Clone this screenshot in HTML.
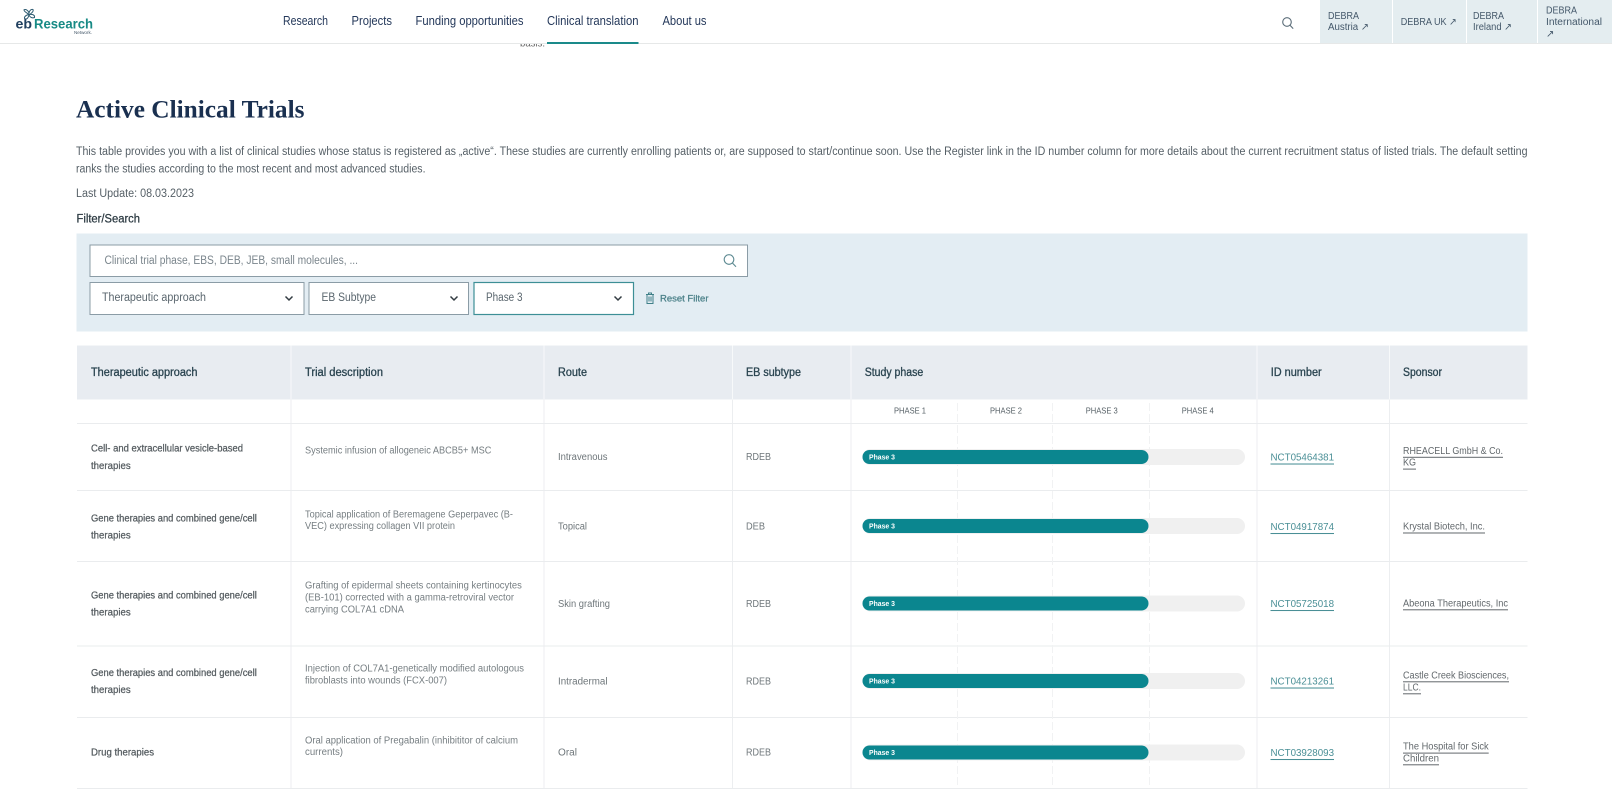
<!DOCTYPE html>
<html lang="en"><head><meta charset="utf-8"><title>Active Clinical Trials</title>
<style>
html,body{margin:0;padding:0;background:#fff;width:1612px;height:800px;overflow:hidden}
svg{display:block}
text{font-family:"Liberation Sans",sans-serif;dominant-baseline:central;transform:translateY(.8px)}
.nav{font-size:12.5px;fill:#24385a}
.deb{font-size:10px;fill:#44586a}
.p{font-size:11.5px;fill:#555f66}
.ph{font-size:11.5px;fill:#5a666e}
.th{font-size:11.5px;fill:#2a4450;stroke:#2a4450;stroke-width:.3px}
.c1{font-size:10px;fill:#555c60;stroke:#555c60;stroke-width:.25px}
.c2{font-size:10px;fill:#767e82}
.c3{font-size:10px;fill:#6e767a}
.lab{font-size:8px;fill:#566066}
.bar{font-size:7.5px;font-weight:bold;fill:#fff;transform:none}
.id{font-size:10.5px;fill:#4a8f96;text-decoration:underline}
.sp{font-size:10px;fill:#62686c;text-decoration:underline}
</style></head><body>
<svg width="1612" height="800" viewBox="0 0 1612 800" xmlns="http://www.w3.org/2000/svg">
<rect width="1612" height="800" fill="#fff"/>
<text x="520" y="43" style="font-size:10px;fill:#666" textLength="25" lengthAdjust="spacingAndGlyphs">basis.</text>
<rect width="1612" height="43" fill="#fff"/>
<rect y="43" width="1612" height="1" fill="#e6e8e8"/>
<g fill="none" stroke="#2c5a70" stroke-width="1"><path d="M29 14.5C26 12 24 12 24 9.8 25.5 9 28 10 29 13 29.5 10.5 31 9 33 9.5 34 11.5 32 13 29.5 14.5 32.5 14 35 15 34.5 17.5 32 18.5 30 17 29 15 28.5 17 27.5 19.5 25 19 23.5 17.5 25.5 15 29 14.5Z"/></g>
<text x="15.5" y="23.3" style="font-size:13.5px;font-weight:bold;fill:#21405f" textLength="16.5" lengthAdjust="spacingAndGlyphs">eb</text>
<text x="34" y="23.3" style="font-size:13.5px;font-weight:bold;fill:#178a85" textLength="59" lengthAdjust="spacingAndGlyphs">Research</text>
<text x="74" y="31.5" style="font-size:4.5px;fill:#44586a" textLength="18" lengthAdjust="spacingAndGlyphs">Network.</text>
<text class="nav" x="283" y="20" textLength="45" lengthAdjust="spacingAndGlyphs">Research</text>
<text class="nav" x="351.5" y="20" textLength="40.5" lengthAdjust="spacingAndGlyphs">Projects</text>
<text class="nav" x="415.5" y="20" textLength="108" lengthAdjust="spacingAndGlyphs">Funding opportunities</text>
<text class="nav" x="547" y="20" textLength="91.5" lengthAdjust="spacingAndGlyphs">Clinical translation</text>
<text class="nav" x="662.5" y="20" textLength="44" lengthAdjust="spacingAndGlyphs">About us</text>
<rect x="547" y="42" width="91.5" height="2" fill="#1a8a8a"/>
<g fill="none" stroke="#5a6c78" stroke-width="1.1"><circle cx="1287" cy="22" r="4.3"/><path d="M1290 25.2l3.2 3.4"/></g>
<rect x="1320" width="72" height="43" fill="#e4edf0"/><rect x="1393" width="73" height="43" fill="#e4edf0"/><rect x="1467" width="70" height="43" fill="#e4edf0"/><rect x="1538" width="74" height="43" fill="#e4edf0"/>
<text class="deb" x="1328" y="15.5" textLength="31" lengthAdjust="spacingAndGlyphs">DEBRA</text>
<text class="deb" x="1328" y="26.5" textLength="41" lengthAdjust="spacingAndGlyphs">Austria ↗</text>
<text class="deb" x="1400.7" y="21.5" textLength="56" lengthAdjust="spacingAndGlyphs">DEBRA UK ↗</text>
<text class="deb" x="1473" y="15.5" textLength="31" lengthAdjust="spacingAndGlyphs">DEBRA</text>
<text class="deb" x="1473" y="26.5" textLength="39" lengthAdjust="spacingAndGlyphs">Ireland ↗</text>
<text class="deb" x="1546" y="10" textLength="31" lengthAdjust="spacingAndGlyphs">DEBRA</text>
<text class="deb" x="1546" y="21.5" textLength="56" lengthAdjust="spacingAndGlyphs">International</text>
<text class="deb" x="1546" y="33.5">↗</text>

<text x="76" y="108" style="font-family:'Liberation Serif',serif;font-size:25.5px;font-weight:bold;fill:#1a3050" textLength="228.5" lengthAdjust="spacingAndGlyphs">Active Clinical Trials</text>
<text class="p" x="76" y="151" textLength="1451.5" lengthAdjust="spacingAndGlyphs">This table provides you with a list of clinical studies whose status is registered as „active“. These studies are currently enrolling patients or, are supposed to start/continue soon. Use the Register link in the ID number column for more details about the current recruitment status of listed trials. The default setting</text>
<text class="p" x="76" y="168.5" textLength="349.5" lengthAdjust="spacingAndGlyphs">ranks the studies according to the most recent and most advanced studies.</text>
<text class="p" x="76" y="193" textLength="118" lengthAdjust="spacingAndGlyphs">Last Update: 08.03.2023</text>
<text class="p" x="76.5" y="218.5" textLength="63.5" lengthAdjust="spacingAndGlyphs" style="fill:#2c3a42;stroke:#2c3a42;stroke-width:.25px">Filter/Search</text>

<rect x="76.5" y="233.5" width="1451" height="98" fill="#e3edf3"/>
<rect x="90" y="245" width="657.5" height="31.5" fill="#fff" stroke="#8b9ca6"/>
<text class="ph" x="104.5" y="260" textLength="253.5" lengthAdjust="spacingAndGlyphs" style="fill:#7a858c">Clinical trial phase, EBS, DEB, JEB, small molecules, ...</text>
<g fill="none" stroke="#5d8a92" stroke-width="1.1"><circle cx="729" cy="259.5" r="4.8"/><path d="M732.4 263l3.6 3.8"/></g>
<rect x="90" y="282.5" width="214" height="32" fill="#fff" stroke="#8b9ca6"/>
<rect x="309" y="282.5" width="159.5" height="32" fill="#fff" stroke="#8b9ca6"/>
<rect x="474" y="282.5" width="159.5" height="32" fill="#fff" stroke="#3d8f96" stroke-width="1.2"/>
<text class="ph" x="102" y="297" textLength="104" lengthAdjust="spacingAndGlyphs">Therapeutic approach</text>
<text class="ph" x="321.5" y="297" textLength="54.5" lengthAdjust="spacingAndGlyphs">EB Subtype</text>
<text class="ph" x="486" y="297" textLength="36.5" lengthAdjust="spacingAndGlyphs">Phase 3</text>
<g fill="none" stroke="#333c42" stroke-width="1.5"><path d="M285.5 296.5l3.5 3.5 3.5-3.5M450.5 296.5l3.5 3.5 3.5-3.5M614.5 296.5l3.5 3.5 3.5-3.5"/></g>
<g fill="none" stroke="#3f8088" stroke-width="1"><path d="M646 294.5h8M648.5 294.5v-1.5h3v1.5M647 294.5v9h6v-9M649 296.5v5M651 296.5v5"/></g>
<text x="660" y="298" style="font-size:9.5px;fill:#4a8088;stroke:#4a8088;stroke-width:.25px" textLength="48.5" lengthAdjust="spacingAndGlyphs">Reset Filter</text>

<rect x="77" y="345.5" width="1450.5" height="54" fill="#e8ecf1"/>
<g fill="#f7f9fa"><rect x="290.5" y="345.5" width="1" height="54"/><rect x="543.5" y="345.5" width="1" height="54"/><rect x="732" y="345.5" width="1" height="54"/><rect x="850.5" y="345.5" width="1" height="54"/><rect x="1256.5" y="345.5" width="1" height="54"/><rect x="1389" y="345.5" width="1" height="54"/></g>
<text class="th" x="91" y="372" textLength="106.5" lengthAdjust="spacingAndGlyphs">Therapeutic approach</text>
<text class="th" x="305" y="372" textLength="78" lengthAdjust="spacingAndGlyphs">Trial description</text>
<text class="th" x="558" y="372" textLength="29" lengthAdjust="spacingAndGlyphs">Route</text>
<text class="th" x="746" y="372" textLength="55" lengthAdjust="spacingAndGlyphs">EB subtype</text>
<text class="th" x="864.7" y="372" textLength="58.5" lengthAdjust="spacingAndGlyphs">Study phase</text>
<text class="th" x="1270.7" y="372" textLength="51" lengthAdjust="spacingAndGlyphs">ID number</text>
<text class="th" x="1403" y="372" textLength="39" lengthAdjust="spacingAndGlyphs">Sponsor</text>

<g fill="#eceef0"><rect x="290.5" y="399.5" width="1" height="389"/><rect x="543.5" y="399.5" width="1" height="389"/><rect x="732" y="399.5" width="1" height="389"/><rect x="850.5" y="399.5" width="1" height="389"/><rect x="1256.5" y="399.5" width="1" height="389"/><rect x="1389" y="399.5" width="1" height="389"/></g>
<g fill="#eaecee"><rect x="77" y="423" width="1450.5" height="1"/><rect x="77" y="490" width="1450.5" height="1"/><rect x="77" y="561" width="1450.5" height="1"/><rect x="77" y="645.5" width="1450.5" height="1"/><rect x="77" y="717" width="1450.5" height="1"/><rect x="77" y="788" width="1450.5" height="1"/></g>
<g stroke="#f1f2f3" stroke-dasharray="8 3"><path d="M957.5 403v385M1052.5 403v385M1149.5 403v385"/></g>
<text class="lab" x="894" y="410" textLength="32" lengthAdjust="spacingAndGlyphs">PHASE 1</text>
<text class="lab" x="990" y="410" textLength="32" lengthAdjust="spacingAndGlyphs">PHASE 2</text>
<text class="lab" x="1085.7" y="410" textLength="32" lengthAdjust="spacingAndGlyphs">PHASE 3</text>
<text class="lab" x="1181.7" y="410" textLength="32" lengthAdjust="spacingAndGlyphs">PHASE 4</text>

<g fill="#f0f0f0">
<rect x="862.5" y="449" width="382.5" height="16" rx="8"/><rect x="862.5" y="518" width="382.5" height="16" rx="8"/><rect x="862.5" y="595.5" width="382.5" height="16" rx="8"/><rect x="862.5" y="673" width="382.5" height="16" rx="8"/><rect x="862.5" y="744.5" width="382.5" height="16" rx="8"/></g>
<g fill="#0b868f">
<rect x="862.5" y="450" width="286" height="14" rx="7"/><rect x="862.5" y="519" width="286" height="14" rx="7"/><rect x="862.5" y="596.5" width="286" height="14" rx="7"/><rect x="862.5" y="674" width="286" height="14" rx="7"/><rect x="862.5" y="745.5" width="286" height="14" rx="7"/></g>
<text class="bar" x="869" y="457" textLength="26" lengthAdjust="spacingAndGlyphs">Phase 3</text>
<text class="bar" x="869" y="526" textLength="26" lengthAdjust="spacingAndGlyphs">Phase 3</text>
<text class="bar" x="869" y="603.5" textLength="26" lengthAdjust="spacingAndGlyphs">Phase 3</text>
<text class="bar" x="869" y="681" textLength="26" lengthAdjust="spacingAndGlyphs">Phase 3</text>
<text class="bar" x="869" y="752.5" textLength="26" lengthAdjust="spacingAndGlyphs">Phase 3</text>

<text class="c1" x="91" y="448.3" textLength="152" lengthAdjust="spacingAndGlyphs">Cell- and extracellular vesicle-based</text>
<text class="c1" x="91" y="465.7" textLength="39.7" lengthAdjust="spacingAndGlyphs">therapies</text>
<text class="c1" x="91" y="518.3" textLength="165.8" lengthAdjust="spacingAndGlyphs">Gene therapies and combined gene/cell</text>
<text class="c1" x="91" y="535" textLength="39.7" lengthAdjust="spacingAndGlyphs">therapies</text>
<text class="c1" x="91" y="595.3" textLength="165.8" lengthAdjust="spacingAndGlyphs">Gene therapies and combined gene/cell</text>
<text class="c1" x="91" y="612" textLength="39.7" lengthAdjust="spacingAndGlyphs">therapies</text>
<text class="c1" x="91" y="672.7" textLength="165.8" lengthAdjust="spacingAndGlyphs">Gene therapies and combined gene/cell</text>
<text class="c1" x="91" y="689.7" textLength="39.7" lengthAdjust="spacingAndGlyphs">therapies</text>
<text class="c1" x="91" y="752.3" textLength="63" lengthAdjust="spacingAndGlyphs">Drug therapies</text>

<text class="c2" x="305" y="450" textLength="186.4" lengthAdjust="spacingAndGlyphs">Systemic infusion of allogeneic ABCB5+ MSC</text>
<text class="c2" x="305" y="514" textLength="208" lengthAdjust="spacingAndGlyphs">Topical application of Beremagene Geperpavec (B-</text>
<text class="c2" x="305" y="525.7" textLength="150" lengthAdjust="spacingAndGlyphs">VEC) expressing collagen VII protein</text>
<text class="c2" x="305" y="585.3" textLength="216.8" lengthAdjust="spacingAndGlyphs">Grafting of epidermal sheets containing kertinocytes</text>
<text class="c2" x="305" y="597" textLength="209" lengthAdjust="spacingAndGlyphs">(EB-101) corrected with a gamma-retroviral vector</text>
<text class="c2" x="305" y="609.3" textLength="99" lengthAdjust="spacingAndGlyphs">carrying COL7A1 cDNA</text>
<text class="c2" x="305" y="668.3" textLength="219" lengthAdjust="spacingAndGlyphs">Injection of COL7A1-genetically modified autologous</text>
<text class="c2" x="305" y="680" textLength="142" lengthAdjust="spacingAndGlyphs">fibroblasts into wounds (FCX-007)</text>
<text class="c2" x="305" y="740" textLength="213" lengthAdjust="spacingAndGlyphs">Oral application of Pregabalin (inhibititor of calcium</text>
<text class="c2" x="305" y="751.7" textLength="38" lengthAdjust="spacingAndGlyphs">currents)</text>

<text class="c3" x="558" y="456.7" textLength="49.5" lengthAdjust="spacingAndGlyphs">Intravenous</text>
<text class="c3" x="558" y="526.3" textLength="29" lengthAdjust="spacingAndGlyphs">Topical</text>
<text class="c3" x="558" y="603.5" textLength="52" lengthAdjust="spacingAndGlyphs">Skin grafting</text>
<text class="c3" x="558" y="681" textLength="49.5" lengthAdjust="spacingAndGlyphs">Intradermal</text>
<text class="c3" x="558" y="752.3" textLength="19" lengthAdjust="spacingAndGlyphs">Oral</text>

<text class="c3" x="746" y="456.7" textLength="25" lengthAdjust="spacingAndGlyphs">RDEB</text>
<text class="c3" x="746" y="526.3" textLength="19" lengthAdjust="spacingAndGlyphs">DEB</text>
<text class="c3" x="746" y="603.5" textLength="25" lengthAdjust="spacingAndGlyphs">RDEB</text>
<text class="c3" x="746" y="681" textLength="25" lengthAdjust="spacingAndGlyphs">RDEB</text>
<text class="c3" x="746" y="752.3" textLength="25" lengthAdjust="spacingAndGlyphs">RDEB</text>

<text class="id" x="1270.5" y="456.7" textLength="63.5" lengthAdjust="spacingAndGlyphs">NCT05464381</text>
<text class="id" x="1270.5" y="526.2" textLength="63.5" lengthAdjust="spacingAndGlyphs">NCT04917874</text>
<text class="id" x="1270.5" y="603.2" textLength="63.5" lengthAdjust="spacingAndGlyphs">NCT05725018</text>
<text class="id" x="1270.5" y="680.7" textLength="63.5" lengthAdjust="spacingAndGlyphs">NCT04213261</text>
<text class="id" x="1270.5" y="752.2" textLength="63.5" lengthAdjust="spacingAndGlyphs">NCT03928093</text>

<text class="sp" x="1403" y="450.5" textLength="100" lengthAdjust="spacingAndGlyphs">RHEACELL GmbH &amp; Co.</text>
<text class="sp" x="1403" y="462.3" textLength="13" lengthAdjust="spacingAndGlyphs">KG</text>
<text class="sp" x="1403" y="526.2" textLength="82" lengthAdjust="spacingAndGlyphs">Krystal Biotech, Inc.</text>
<text class="sp" x="1403" y="603" textLength="105" lengthAdjust="spacingAndGlyphs">Abeona Therapeutics, Inc</text>
<text class="sp" x="1403" y="675" textLength="106" lengthAdjust="spacingAndGlyphs">Castle Creek Biosciences,</text>
<text class="sp" x="1403" y="687" textLength="18" lengthAdjust="spacingAndGlyphs">LLC.</text>
<text class="sp" x="1403" y="746.3" textLength="85.7" lengthAdjust="spacingAndGlyphs">The Hospital for Sick</text>
<text class="sp" x="1403" y="758" textLength="36" lengthAdjust="spacingAndGlyphs">Children</text>
</svg>
</body></html>
